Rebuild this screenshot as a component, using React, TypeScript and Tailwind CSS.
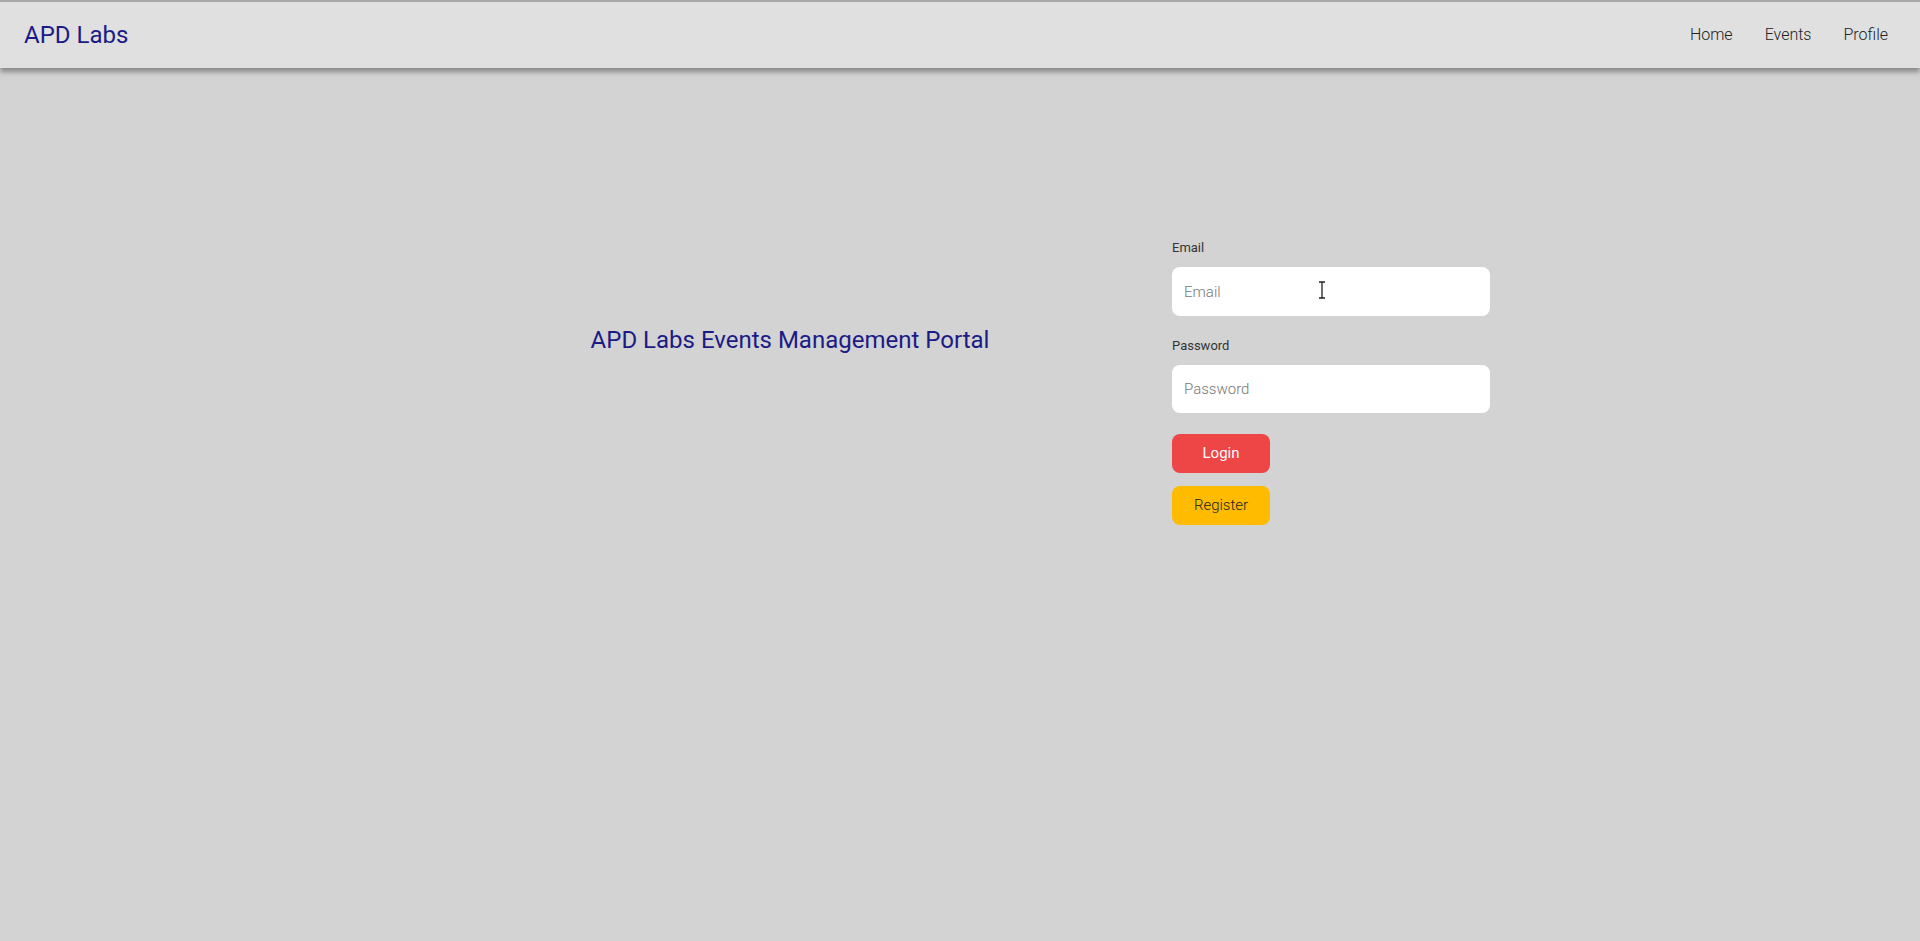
export default function App() {
  const links = ["Home", "Events", "Profile"];

  return (
    <div className="min-h-[941px] bg-[#d3d3d3] font-['Roboto',sans-serif]">
      {/* Navbar */}
      <nav className="relative z-10 h-[68px] flex items-center justify-between bg-[#e0e0e0] border-t-2 border-[#a9a9a9] px-6 pr-8 shadow-[0_4px_5px_rgba(0,0,0,0.35)]">
        <span className="text-[24px] text-[#1b1b86]">APD Labs</span>
        <div className="flex gap-8">
          {links.map((l) => (
            <a key={l} className="text-[16px] font-light text-[#222]">
              {l}
            </a>
          ))}
        </div>
      </nav>

      {/* Main */}
      <main className="flex justify-center gap-[22px] pt-[170px]">
        <div className="w-[720px] pt-[86px] text-center">
          <h1 className="text-[24px] leading-[32px] text-[#1b1b86]">
            APD Labs Events Management Portal
          </h1>
        </div>

        <div className="w-[318px] flex flex-col">
          <label className="text-[13px] leading-[20px] text-[#333]">Email</label>
          <div className="relative mt-[9px]">
            <input
              placeholder="Email"
              className="w-full h-[49px] rounded-lg bg-white px-3 text-[15px] font-light outline-none placeholder:text-[#777]"
            />
            {/* mouse cursor */}
            <svg
              className="absolute left-[146px] top-[14px]"
              width="8"
              height="18"
              viewBox="0 0 8 18"
              fill="none"
              stroke="#222"
              strokeWidth="1.3"
            >
              <path d="M1 1h6M1 17h6M4 1v16" />
            </svg>
          </div>

          <label className="mt-[20px] text-[13px] leading-[20px] text-[#333]">Password</label>
          <input
            type="password"
            placeholder="Password"
            className="mt-[9px] w-full h-[48px] rounded-lg bg-white px-3 text-[15px] font-light outline-none placeholder:text-[#777]"
          />

          <button className="mt-[21px] w-[98px] h-[39px] rounded-lg bg-[#ee4646] text-[15px] text-white">
            Login
          </button>
          <button className="mt-[13px] w-[98px] h-[39px] rounded-lg bg-[#ffbb00] text-[15px] font-light text-[#222]">
            Register
          </button>
        </div>
      </main>
    </div>
  );
}
